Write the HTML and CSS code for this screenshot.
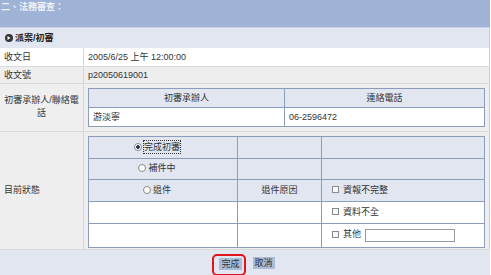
FILE: index.html
```html
<!DOCTYPE html>
<html>
<head>
<meta charset="utf-8" />
<title>法務審查</title>
<link rel="stylesheet" href="styles.css">
</head>
<body>
<div class="page">
	<div class="title">二、法務審查：</div>
	<div class="band">
		<svg class="bullet" width="8" height="8" viewBox="0 0 8 8"><circle cx="4" cy="4" r="4" fill="#333"/><path d="M2.5 2 L5.5 4 L2.5 6 Z" fill="#fff"/></svg>派案/初審
	</div>

	<table class="form">
		<tr class="plain">
			<th>收文日</th>
			<td>2005/6/25 上午 12:00:00</td>
		</tr>
		<tr class="r2">
			<th>收文號</th>
			<td>p20050619001</td>
		</tr>
		<tr class="r3">
			<th class="center">初審承辦人/聯絡電話</th>
			<td class="nest">
				<table class="inner contact">
					<col class="c1"><col class="c2">
					<tr class="head"><th>初審承辦人</th><th>連絡電話</th></tr>
					<tr><td>游淡寧</td><td>06-2596472</td></tr>
				</table>
			</td>
		</tr>
		<tr class="r4">
			<th>目前狀態</th>
			<td class="nest status-cell">
				<table class="inner status">
					<col class="s1"><col class="s2"><col class="s3">
					<tr class="tint h22">
						<td class="opt"><label><input type="radio" name="st" checked><span class="focus">完成初審</span></label></td>
						<td></td><td></td>
					</tr>
					<tr class="tint h21">
						<td class="opt"><label><input type="radio" name="st">補件中</label></td>
						<td></td><td></td>
					</tr>
					<tr class="tint h22">
						<td class="opt"><label><input type="radio" name="st">退件</label></td>
						<td class="reason">退件原因</td>
						<td><label><input type="checkbox">資報不完整</label></td>
					</tr>
					<tr class="h22">
						<td></td><td></td>
						<td><label><input type="checkbox">資料不全</label></td>
					</tr>
					<tr class="h24">
						<td></td><td></td>
						<td><label><input type="checkbox">其他</label><input class="other" type="text"></td>
					</tr>
				</table>
			</td>
		</tr>
	</table>

	<div class="actions">
		<span class="mark"><button class="btn">完成</button></span>
		<button class="btn">取消</button>
	</div>
</div>
</body>
</html>
```

FILE: styles.css
```css
body {
	margin: 0;
	font-family: "Liberation Sans", "Noto Sans CJK TC", sans-serif;
	font-size: 9px;
	line-height: 12px;
	color: #333;
	background: #fff;
}
.page {
	width: 490px;
}
.title {
	height: 27px;
	background: #9eb3d5;
	color: #eef1f8;
	font-weight: bold;
	line-height: 15px;
	padding-left: 1px;
	border-bottom: 1px solid #c7d2e6;
}
.band {
	height: 20px;
	background: #e1e6f1;
	font-weight: bold;
	color: #222;
	padding-left: 5px;
	display: flex;
	align-items: center;
	gap: 2px;
	border-right: 1px solid #cfcfcf;
}
.bullet {
	display: block;
}

/* main form */
.form {
	width: 490px;
	border-collapse: collapse;
	border-right: 1px solid #cfcfcf;
}
.form > tbody > tr > th,
.form > tbody > tr > td {
	border-bottom: 1px solid #dadada;
	padding: 0 4px;
	text-align: left;
	font-weight: normal;
	vertical-align: middle;
}
.form > tbody > tr > th {
	width: 75px;
	border-right: 1px solid #d6d6d6;
}
.form .center {
	text-align: center;
	line-height: 13px;
}
.plain { height: 18px; }
.plain > th, .plain > td { background: #fff; }
.r2 { height: 17px; }
.r2 > th, .r2 > td { background: #eeeeee; }
.r3 { height: 48px; }
.r3 > th, .r3 > td { background: #efefef; }
.r4 { height: 116px; }
.r4 > th, .r4 > td { background: #eeeeee; }
.form .nest {
	padding: 4px;
}
.form .status-cell {
	padding: 4px 4px 1px 4px;
}

/* nested tables */
.inner {
	width: 100%;
	border-collapse: collapse;
	background: #fff;
}
.inner th, .inner td {
	border: 1px solid #8c9dbb;
	padding: 0 4px;
	font-weight: normal;
}
.contact .c1 { width: 196px; }
.contact tr { height: 19px; }
.contact .head th {
	background: #e1e6f1;
	text-align: center;
}
.status .s1 { width: 149px; }
.status .s2 { width: 84px; }
.status .tint td { background: #e1e6f1; }
.status .h21 { height: 21px; }
.status .h22 { height: 22px; }
.status .h24 { height: 24px; }
.status .opt {
	text-align: center;
	padding-right: 16px;
}
.status .reason {
	text-align: center;
}
.status label {
	display: inline-flex;
	align-items: center;
	gap: 2px;
}
.focus {
	outline: 1px dotted #333;
	outline-offset: 0;
}

input[type=radio] {
	appearance: none;
	width: 8px;
	height: 8px;
	margin: 0;
	border: 1px solid #8a8a8a;
	border-radius: 50%;
	background: #fff;
}
input[type=radio]:checked {
	background: radial-gradient(circle, #2a3a6a 0 1.6px, #fff 2px);
}
input[type=checkbox] {
	appearance: none;
	width: 7px;
	height: 7px;
	margin: 0 2px 0 6px;
	border: 1px solid #8a8a8a;
	background: #f7f7f7;
}
.other {
	width: 88px;
	height: 11px;
	margin-left: 4px;
	padding: 0;
	border: 1px solid #9a9a9a;
	vertical-align: middle;
}

/* buttons */
.actions {
	height: 25px;
	background: #e1e6f1;
	border-bottom: 1px solid #a8a8a8;
	display: flex;
	justify-content: center;
	align-items: flex-end;
	gap: 7px;
	padding-right: 3px;
}
.mark {
	border: 2px solid #e0141b;
	border-radius: 5px;
	padding: 2px 2px 4px 5px;
	margin-bottom: -1px;
}
.btn {
	font-family: "Liberation Sans", "Noto Sans CJK TC", sans-serif;
	font-size: 9px;
	color: #333;
	background: #a9bcd8;
	border: none;
	padding: 0 2px;
	height: 12px;
	line-height: 12px;
	display: block;
}
.actions > .btn {
	margin-bottom: 6px;
}
```
